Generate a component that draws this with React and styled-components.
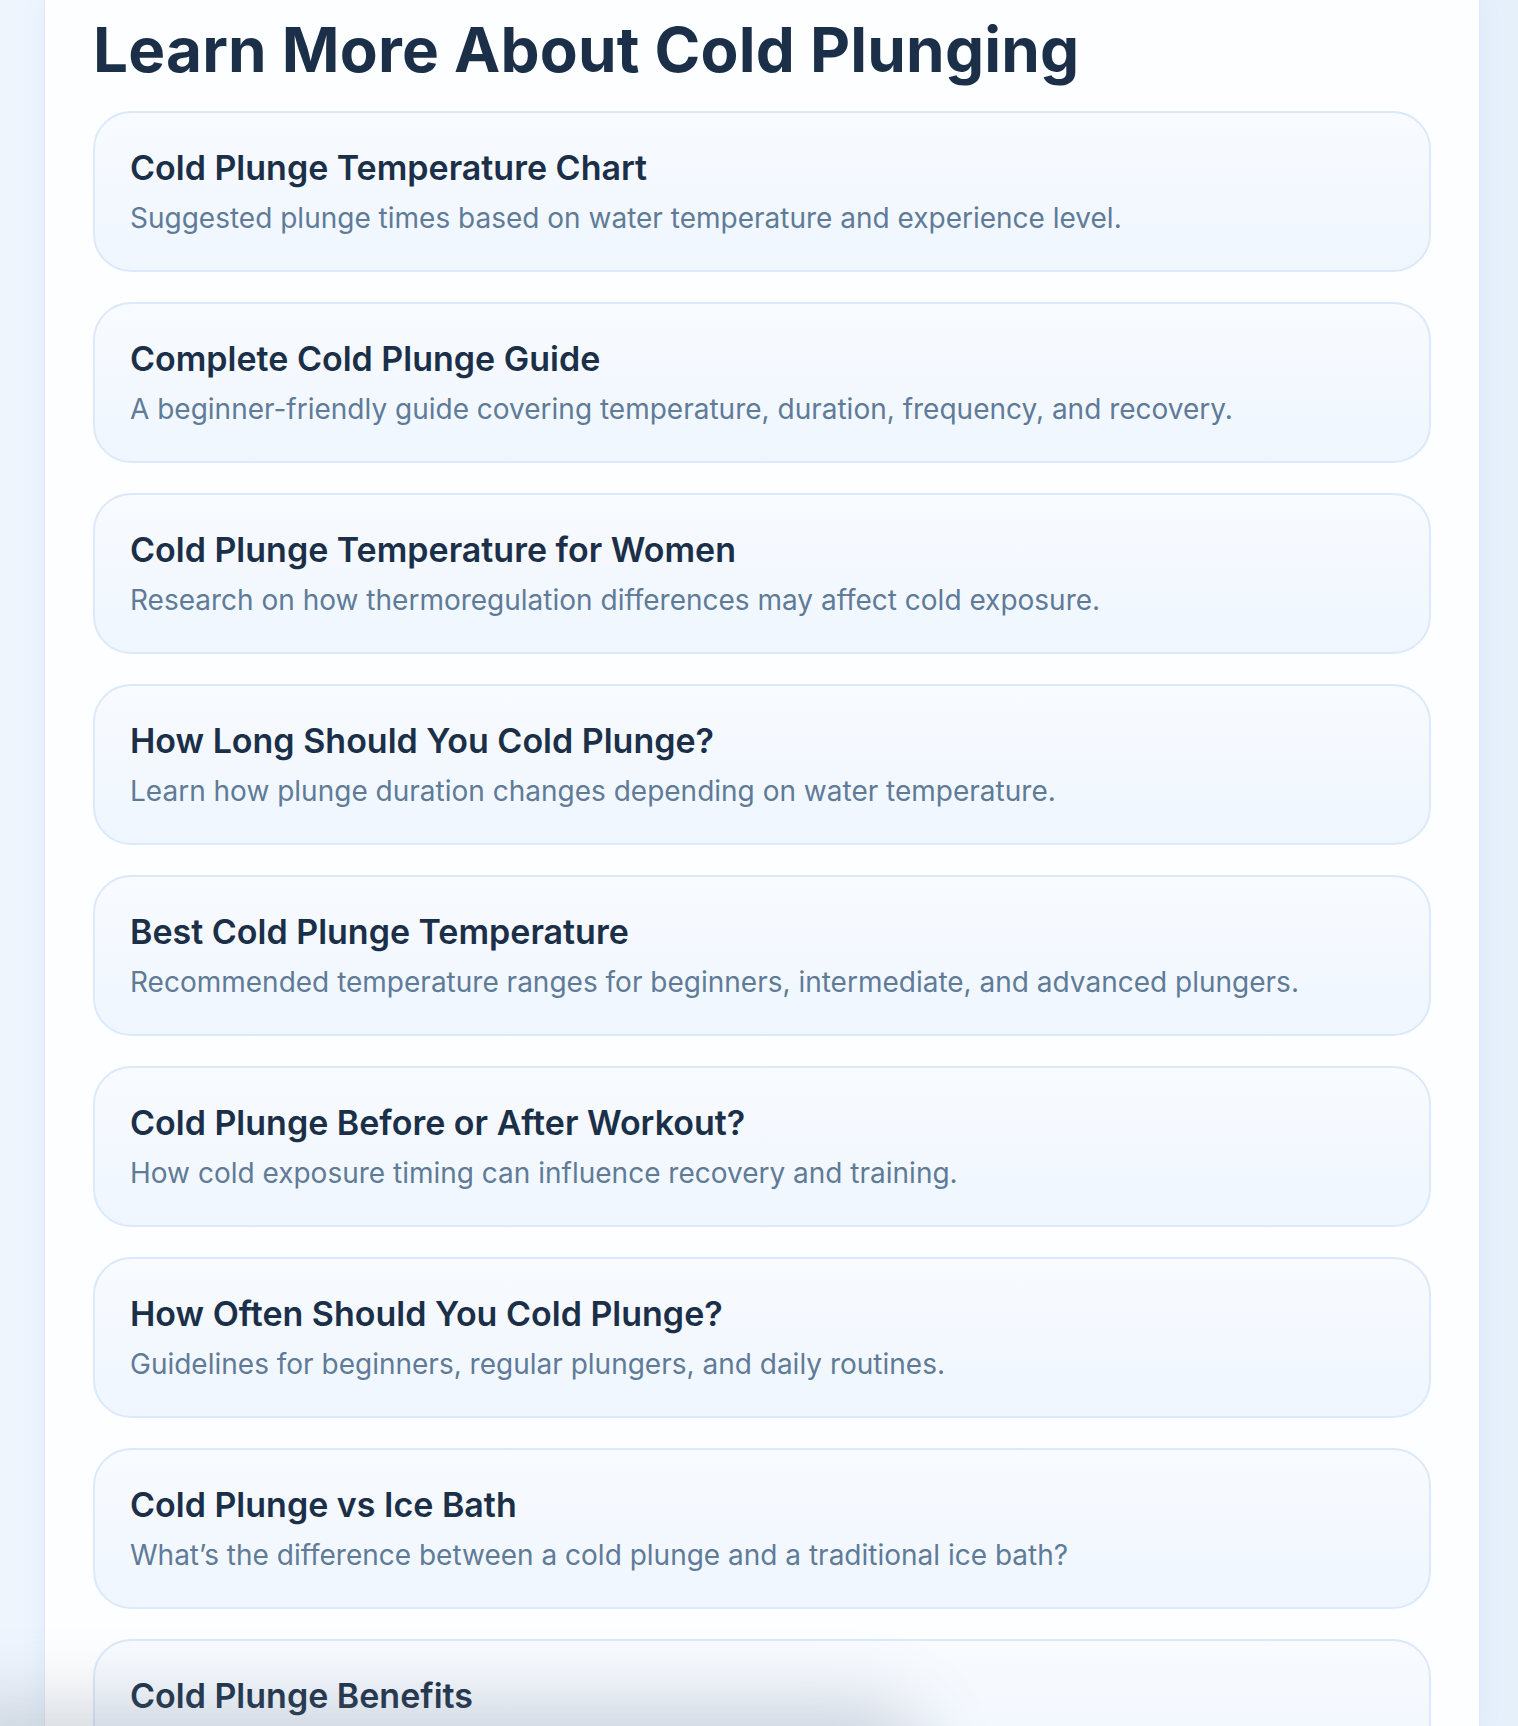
import React from "react";
import styled, { createGlobalStyle } from "styled-components";

const articles = [
  {
    title: "Cold Plunge Temperature Chart",
    text: "Suggested plunge times based on water temperature and experience level.",
  },
  {
    title: "Complete Cold Plunge Guide",
    text: "A beginner-friendly guide covering temperature, duration, frequency, and recovery.",
  },
  {
    title: "Cold Plunge Temperature for Women",
    text: "Research on how thermoregulation differences may affect cold exposure.",
  },
  {
    title: "How Long Should You Cold Plunge?",
    text: "Learn how plunge duration changes depending on water temperature.",
  },
  {
    title: "Best Cold Plunge Temperature",
    text: "Recommended temperature ranges for beginners, intermediate, and advanced plungers.",
  },
  {
    title: "Cold Plunge Before or After Workout?",
    text: "How cold exposure timing can influence recovery and training.",
  },
  {
    title: "How Often Should You Cold Plunge?",
    text: "Guidelines for beginners, regular plungers, and daily routines.",
  },
  {
    title: "Cold Plunge vs Ice Bath",
    text: "What\u2019s the difference between a cold plunge and a traditional ice bath?",
  },
  {
    title: "Cold Plunge Benefits",
    text: "What research says about recovery, mood, and cold tolerance.",
  },
];

const GlobalStyle = createGlobalStyle`
  html, body {
    margin: 0;
    padding: 0;
  }

  body {
    background: linear-gradient(90deg, #eef5fd 0%, #e6f0fb 100%);
    font-family: Inter, "Noto Sans", sans-serif;
    overflow: hidden;
  }
`;

const Page = styled.div`
  display: flex;
  justify-content: center;
  padding: 0 38px 0 44px;
  height: 1726px;
  overflow: hidden;
`;

const Panel = styled.main`
  flex: 1;
  background: #fdfeff;
  border-left: 1px solid #dde9f8;
  border-right: 1px solid #dde9f8;
  box-shadow: 0 0 24px rgba(59, 130, 246, 0.07);
  padding: 16px 48px 0 48px;
`;

const Heading = styled.h2`
  margin: 0 0 27px;
  font-family: Inter, sans-serif;
  font-size: 62px;
  line-height: 1.1;
  font-weight: 700;
  letter-spacing: 0.2px;
  color: #1b3048;
`;

const List = styled.div`
  display: flex;
  flex-direction: column;
  gap: 30px;
`;

const Card = styled.a`
  display: flex;
  flex-direction: column;
  gap: 9px;
  padding: 35px 36px 31px 35px;
  border: 2px solid #dbe9fb;
  border-radius: 38px;
  background: linear-gradient(180deg, #f8fbff 0%, #eff6fe 100%);
  text-decoration: none;
`;

const CardTitle = styled.h3`
  margin: 0;
  font-size: 34px;
  line-height: 40px;
  font-weight: 600;
  color: #1b3048;
`;

const CardText = styled.p`
  margin: 0;
  font-size: 28px;
  line-height: 42px;
  color: #5f7b98;
`;

const BottomShade = styled.div`
  position: fixed;
  left: -60px;
  bottom: -90px;
  width: 960px;
  height: 90px;
  border-radius: 40px;
  background: #cfd6de;
  box-shadow: 0 0 70px 24px rgba(120, 130, 145, 0.3);
  pointer-events: none;
`;

export default function App() {
  return (
    <>
      <GlobalStyle />
      <Page>
        <Panel>
          <Heading>Learn More About Cold Plunging</Heading>
          <List>
            {articles.map((a) => (
              <Card key={a.title} href="#">
                <CardTitle>{a.title}</CardTitle>
                <CardText>{a.text}</CardText>
              </Card>
            ))}
          </List>
        </Panel>
      </Page>
      <BottomShade />
    </>
  );
}
